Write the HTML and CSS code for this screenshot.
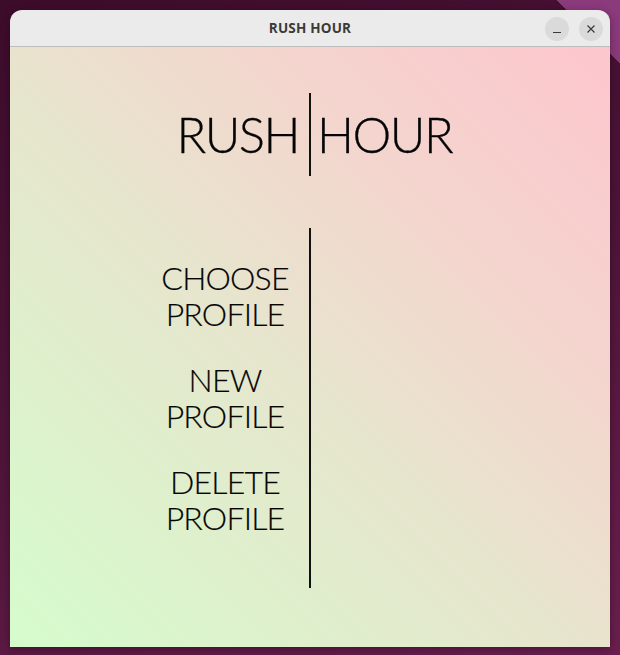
FILE: index.html
```html
<!DOCTYPE html>
<html>
<head>
<meta charset="utf-8">
<link rel="stylesheet" href="styles.css">
</head>
<body>
<div class="desktop">
  <div class="window">
    <div class="titlebar">
      <span class="title">RUSH HOUR</span>
      <div class="controls">
        <span class="ctl"><svg width="10" height="10" viewBox="0 0 10 10"><path d="M1 8.5h8" stroke="#3a3a3a" stroke-width="1.2"/></svg></span>
        <span class="ctl"><svg width="10" height="10" viewBox="0 0 10 10"><path d="M1.5 1.5l7 7M8.5 1.5l-7 7" stroke="#3a3a3a" stroke-width="1.2"/></svg></span>
      </div>
    </div>
    <div class="content">
      <div class="logo">
        <span class="logo-left">RUSH</span>
        <span class="logo-bar"></span>
        <span class="logo-right">HOUR</span>
      </div>
      <div class="menu-row">
        <div class="menu">
          <div class="item">CHOOSE<br>PROFILE</div>
          <div class="item">NEW<br>PROFILE</div>
          <div class="item">DELETE<br>PROFILE</div>
        </div>
        <span class="menu-bar"></span>
        <div class="spacer"></div>
      </div>
    </div>
  </div>
</div>
</body>
</html>
```
FILE: styles.css
```css
html, body { margin: 0; padding: 0; }
body {
  width: 620px;
  height: 655px;
  overflow: hidden;
}
.desktop {
  width: 620px;
  height: 655px;
  box-sizing: border-box;
  padding: 10px 10px 8px 10px;
  background:
    linear-gradient(225deg, #8b3a7c 0 5%, transparent 5%),
    linear-gradient(160deg, #3d0c2b 0%, #4d1438 50%, #6b1f4f 100%);
}
.window {
  width: 600px;
  height: 637px;
  display: flex;
  flex-direction: column;
  border-radius: 12px 12px 0 0;
  overflow: hidden;
  box-shadow: 0 2px 8px rgba(0,0,0,0.35);
}
.titlebar {
  height: 36px;
  flex: none;
  background: #ebebeb;
  border-bottom: 1px solid #bdbdbd;
  display: flex;
  align-items: center;
  justify-content: center;
  position: relative;
}
.title {
  font-family: "Open Sans", "DejaVu Sans", sans-serif;
  font-weight: 700;
  font-size: 13.5px;
  color: #3a3a3a;
  letter-spacing: 0.2px;
}
.controls {
  position: absolute;
  right: 7px;
  top: 7px;
  display: flex;
  gap: 10px;
}
.ctl {
  width: 24px;
  height: 24px;
  border-radius: 50%;
  background: #dadada;
  display: flex;
  align-items: center;
  justify-content: center;
}
.content {
  flex: 1;
  background: linear-gradient(to top right, #d5fccc 0%, #e6e6cd 45%, #f3d6ce 70%, #fdc6cd 100%);
  display: flex;
  flex-direction: column;
  font-family: "Lato", "Open Sans", sans-serif;
  font-weight: 300;
  color: #050505;
}
.logo {
  display: grid;
  grid-template-columns: 1fr auto 1fr;
  align-items: center;
  margin-top: 46px;
  height: 83px;
}
.logo-left, .logo-right {
  font-size: 49px;
  line-height: 1;
  letter-spacing: -1.5px;
  -webkit-text-stroke: 0.3px #050505;
}
.logo-left { text-align: right; padding-right: 10px; }
.logo-right { text-align: left; padding-left: 6px; }
.logo-bar {
  width: 2px;
  height: 83px;
  background: #111;
}
.menu-row {
  display: grid;
  grid-template-columns: 1fr 2px 1fr;
  margin-top: 52px;
}
.menu {
  display: flex;
  flex-direction: column;
  align-items: flex-end;
  padding-top: 32px;
}
.item {
  width: 166px;
  text-align: center;
  font-size: 32px;
  line-height: 36px;
  letter-spacing: -0.8px;
  margin-right: 1px;
  margin-bottom: 30px;
  -webkit-text-stroke: 0.2px #050505;
}
.menu-bar {
  width: 2px;
  height: 360px;
  background: #111;
}
```
